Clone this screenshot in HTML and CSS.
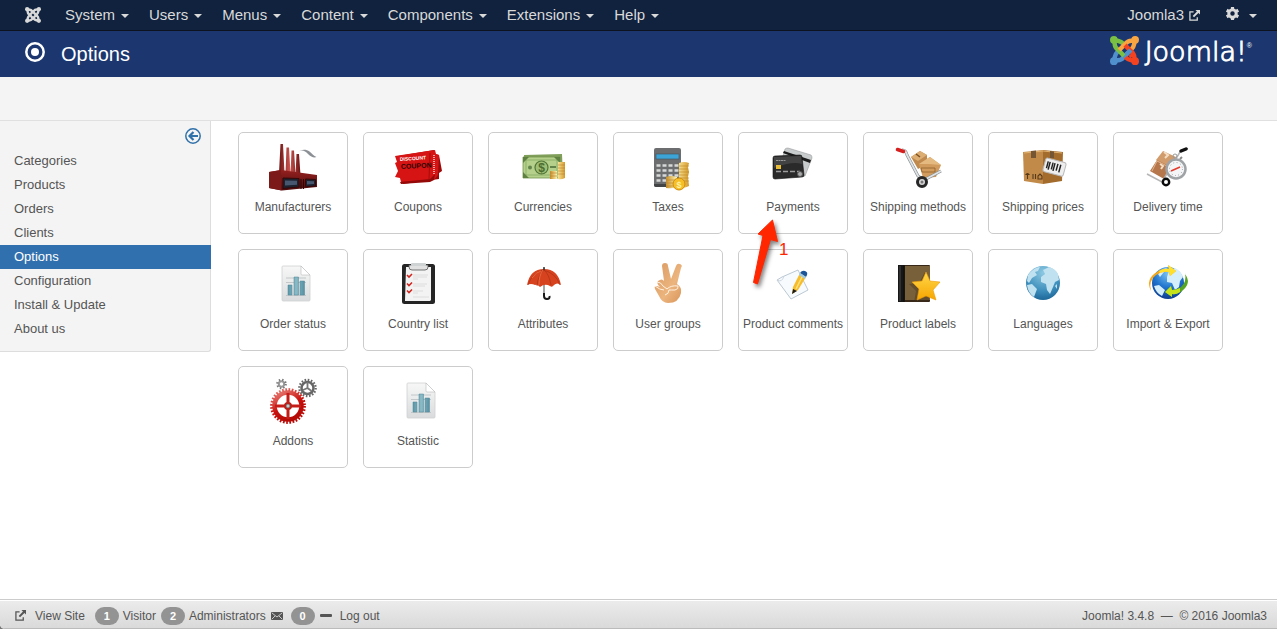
FILE: index.html
```html
<!DOCTYPE html>
<html lang="en">
<head>
<meta charset="utf-8">
<title>Options - Joomla3</title>
<link rel="stylesheet" href="styles.css">
</head>
<body>
<svg class="defs" aria-hidden="true">
  <defs>
    <g id="arm"><circle cx="4" cy="4" r="4" stroke="none"/><path d="M4 4C6 8 3 10 8 14L14.500 20.500M5 4C9 6 10 4 14 8" fill="none" stroke-width="4.600"/></g>
    <symbol id="out" viewBox="0 0 12 12"><path d="M5 2H1v9h8V8" fill="none" stroke="currentColor" stroke-width="1.400"/><path d="M7 0h5v5L10.300 3.300 5.500 8 4 6.500 8.700 1.700z" fill="currentColor"/></symbol>
    <linearGradient id="brick" x2="1"><stop offset="0" stop-color="#6e1414"/><stop offset=".5" stop-color="#c85550"/><stop offset="1" stop-color="#6a1212"/></linearGradient>
    <linearGradient id="wall" x2="0" y2="1"><stop offset="0" stop-color="#94201f"/><stop offset="1" stop-color="#4d0c0c"/></linearGradient>
    <linearGradient id="gold" x2="1"><stop offset="0" stop-color="#c58c2a"/><stop offset=".45" stop-color="#fff0a8"/><stop offset="1" stop-color="#d39a2c"/></linearGradient>
    <linearGradient id="paper" x2="0" y2="1"><stop offset="0" stop-color="#f7f7f7"/><stop offset="1" stop-color="#d9dbdc"/></linearGradient>
    <linearGradient id="bar" x2="1"><stop offset="0" stop-color="#5b98a9"/><stop offset=".5" stop-color="#8abac6"/><stop offset="1" stop-color="#5690a2"/></linearGradient>
    <linearGradient id="star" x2="0" y2="1"><stop offset="0" stop-color="#ffd84a"/><stop offset="1" stop-color="#f7a600"/></linearGradient>
    <linearGradient id="skin" x2="1" y2="1"><stop offset="0" stop-color="#d99a62"/><stop offset=".6" stop-color="#ecb47e"/><stop offset="1" stop-color="#d89558"/></linearGradient>
    <linearGradient id="redgear" x2=".5" y2="1"><stop offset="0" stop-color="#e88078"/><stop offset=".6" stop-color="#c8100c"/><stop offset="1" stop-color="#b50a06"/></linearGradient>
    <radialGradient id="sea" cx=".5" cy=".2" r=".9"><stop offset="0" stop-color="#8cc8e2"/><stop offset=".6" stop-color="#3c8dbb"/><stop offset="1" stop-color="#125a8c"/></radialGradient>
    <radialGradient id="deep" cx=".5" cy=".2" r=".9"><stop offset="0" stop-color="#79c4f4"/><stop offset=".5" stop-color="#1f72cc"/><stop offset="1" stop-color="#0a2f80"/></radialGradient>
    <symbol id="report" viewBox="0 0 48 48">
      <path d="M14 6h18l9 9v25q0 1-1 1H14q-1 0-1-1V7q0-1 1-1z" fill="url(#paper)" stroke="#cfd1d2" stroke-width=".8"/>
      <path d="M32 6l9 9h-8q-1 0-1-1z" fill="#fff" stroke="#b9bbbc" stroke-width=".6"/>
      <path d="M17 18h20M17 22.500h20M17 35.500h20" stroke="#b9bec0" stroke-width=".8"/>
      <path d="M19 25h4v10h-4zM25 17h4.500v18H25zM31 21h4.500v14H31z" fill="url(#bar)" stroke="#4d8797" stroke-width=".5"/>
    </symbol>
  </defs>
</svg>
<div class="page">
  <nav class="topbar" aria-label="Main menu">
    <a class="brand" href="#" aria-label="Joomla"><svg viewBox="0 0 30 30" fill="#d9d9d9" stroke="#d9d9d9"><use href="#arm"/><use href="#arm" transform="rotate(90 15 15)"/><use href="#arm" transform="rotate(180 15 15)"/><use href="#arm" transform="rotate(270 15 15)"/></svg></a>
    <a class="menu" href="#">System<i class="caret"></i></a>
    <a class="menu" href="#">Users<i class="caret"></i></a>
    <a class="menu" href="#">Menus<i class="caret"></i></a>
    <a class="menu" href="#">Content<i class="caret"></i></a>
    <a class="menu" href="#">Components<i class="caret"></i></a>
    <a class="menu" href="#">Extensions<i class="caret"></i></a>
    <a class="menu" href="#">Help<i class="caret"></i></a>
    <a class="menu site" href="#">Joomla3<svg class="out"><use href="#out"/></svg></a>
    <a class="menu gear" href="#" aria-label="User menu"><svg viewBox="0 0 14 14"><circle cx="7" cy="7" r="4" fill="none" stroke="currentColor" stroke-width="3.200"/><path d="M7 0v2.500M7 11.500V14M.8 3.500l2.200 1.200M11 9.300l2.200 1.200M.8 10.500L3 9.300M11 4.700l2.200-1.200" stroke="currentColor" stroke-width="3.400"/></svg><i class="caret"></i></a>
  </nav>
  <header class="header">
    <svg class="target" viewBox="0 0 20 20"><circle cx="10" cy="10" r="8.700" fill="none" stroke="#fff" stroke-width="2.500"/><circle cx="10" cy="10" r="4" fill="#fff"/></svg>
    <h1>Options</h1>
    <a class="logo" href="#">
      <svg viewBox="0 0 30 30"><use href="#arm" transform="rotate(270 15 15)" fill="#5091cd" stroke="#5091cd"/><use href="#arm" fill="#7ac143" stroke="#7ac143"/><use href="#arm" transform="rotate(90 15 15)" fill="#f9a541" stroke="#f9a541"/><use href="#arm" transform="rotate(180 15 15)" fill="#f44321" stroke="#f44321"/><path d="M16.500 19.500l5-5" stroke="#5091cd" stroke-width="4.600"/><path d="M21 19l2 2.500" stroke="#f44321" stroke-width="4.600"/></svg>
      <span class="word">Joomla!</span><sup>®</sup>
    </a>
  </header>
  <div class="subhead"></div>
  <div class="body">
    <aside class="sidebar">
      <div class="tools"><button type="button" aria-label="Hide sidebar"><svg viewBox="0 0 16 16" fill="none" stroke="#3071a9"><circle cx="8" cy="8" r="7.200" stroke-width="1.500"/><path d="M13 8H5M8.500 4L4.500 8l4 4" stroke-width="2.200"/></svg></button></div>
      <a href="#">Categories</a>
      <a href="#">Products</a>
      <a href="#">Orders</a>
      <a href="#">Clients</a>
      <a class="active" href="#">Options</a>
      <a href="#">Configuration</a>
      <a href="#">Install &amp; Update</a>
      <a href="#">About us</a>
    </aside>
    <main class="tiles">
      <a class="tile" href="#"><svg viewBox="0 0 48 48">
        <path d="M11.500 1h2.500l1.500 29h-5.500zM17.500 4.500H20l1.500 26h-5zM22.500 7.500H25l1.500 24h-5zM27.500 11H30l1.500 21h-5z" fill="url(#brick)"/>
        <path d="M29 9c4-3 7-1 10 2s6 4 8.500 3c-3-1-4-3-7-5.500S32 6 29 9z" fill="#8c9095"/>
        <path d="M0 29l12-2 36 5v12l-35 3.500L0 45z" fill="url(#wall)"/><path d="M0 29l12-2 .5 20.500L0 45z" fill="#7c1a1a"/>
        <path d="M14 35l16 .5V44l-16 1.500zM36.500 36l10 .5v6.500l-10 .8z" fill="#1c222e" stroke="#350707"/><path d="M16 37.500l12 .3v4L16 42.500zM38 38l7 .2V41l-7 .4z" fill="#475770"/>
        <path d="M32 36v10M34.500 36v10" stroke="#2c0505"/></svg><span>Manufacturers</span></a>
      <a class="tile" href="#"><svg viewBox="0 0 48 48">
        <path d="M4 13l36-6 1 4 4 1 3 16-3 2v6L9 41l-2-4z" fill="#9c0909"/>
        <path d="M1 13l40-6 1 4 3 1-1 20-4 5-33 2-1-4-5-1 3-6-3-8 2-1z" fill="#d71414"/>
        <path d="M6 39l30-3 5-5-1 6-4 2-29 2z" fill="#950909"/><path d="M36 10l-1 26" stroke="#a60c0c"/>
        <path d="M40 12v19" stroke="#f2a4a0" stroke-width="2" stroke-dasharray="1 1"/>
        <text x="6" y="18" class="coupon light" transform="rotate(-4 6 18)">DISCOUNT</text><text x="7" y="26" class="coupon dark" transform="rotate(-3 7 26)">COUPON</text></svg><span>Coupons</span></a>
      <a class="tile" href="#"><svg viewBox="0 0 48 48">
        <path d="M5 12l38-1 1 22-38 1z" fill="#7f9f5a"/><path d="M4 14h37v21H4z" fill="#b4d08b" stroke="#76954f" stroke-width=".8"/>
        <path d="M7 17h31v15H7z" fill="none" stroke="#86a860" stroke-width=".8"/><path d="M4 14h6l-6 6zM41 14h-6l6 6zM4 35v-6l6 6z" fill="#5e8040"/>
        <circle cx="22.500" cy="24.500" r="6.500" fill="#a0bf76" stroke="#527537" stroke-width="1.200"/><text x="22.500" y="29" class="dollar green">$</text>
        <circle cx="11" cy="24.500" r="2" fill="#62844a"/><path d="M31 24h6" stroke="#62844a" stroke-width="2"/>
        <path d="M31 28h7v8h-7zM39 19h7v16q-4 2-7 1z" fill="url(#gold)"/><path d="M31 30h7m-7 3h7M39 22h7m-7 3h7m-7 3h7m-7 3h7" stroke="#b87c28" stroke-width=".6"/></svg><span>Currencies</span></a>
      <a class="tile" href="#"><svg viewBox="0 0 48 48">
        <rect x="10" y="5" width="27" height="39" rx="2" fill="#6b6d6f"/><path d="M10 41h27v1q0 2-2 2H12q-2 0-2-2z" fill="#424446"/><rect x="12" y="11" width="23" height="5" fill="#3da4d8" stroke="#43525a" stroke-width=".6"/>
        <path d="M12.500 22.500h22M12.500 27.500h22M12.500 32.500h22M12.500 37.500h22" stroke="#d8d8d8" stroke-width="2.600" stroke-dasharray="4 2"/>
        <path d="M35 20q5-2 10 0l-1 4 1 5-1 5 1 9q-5 3-10 1zM22 34q5-2 11 0v10q-5 2-11 1z" fill="url(#gold)"/><path d="M35 23h10m-10 3h9m-9 3h10m-10 3h9m-9 3h10m-10 3h10M22 37h11m-11 3h11m-11 3h11" stroke="#bd841f" stroke-width=".6"/>
        <circle cx="35" cy="41" r="6" fill="#f6bf27" stroke="#d08c0b"/><text x="35" y="44.500" class="dollar coin">$</text></svg><span>Taxes</span></a>
      <div class="spot">
        <a class="tile" href="#"><svg viewBox="0 0 48 48">
          <path d="M16 6q1-1 3-1l23 7q1 1 1 3l-7 18-9 1-13-21z" fill="#c9cccd" stroke="#8b8d8e" stroke-width=".5"/><path d="M14 10l1-2 27 9-1 3z" fill="#1c1c1c"/>
          <path d="M4 15q0-2 2-2l25-1q2 0 2 2l2 18q0 2-2 2L6 36q-2 0-2-2z" fill="#2a2a2a" stroke="#111" stroke-width=".6"/><path d="M5 14l27-1 1 8q-10-3-28 4z" fill="#555" opacity=".6"/>
          <rect x="7" y="22" width="5" height="4" fill="#e7bd39"/><path d="M7 17.500h10" stroke="#999" stroke-width="1.200" stroke-dasharray="2 .5"/><path d="M7 28.500h24" stroke="#9d9d9d" stroke-width="1.300" stroke-dasharray="5 2"/><circle cx="31" cy="31" r="2.500" fill="#aaa" stroke="#555"/></svg><span>Payments</span></a>
        <div class="note"><svg viewBox="0 0 42 76"><path d="M34.500 6L20 20l5 1.500L15.500 68.500l4 1.500 13-44.500 7 2z" fill="#ff2600" stroke="#ff2600"/></svg><b>1</b></div>
      </div>
      <a class="tile" href="#"><svg viewBox="0 0 48 48">
        <path d="M17 14l9-6 7 4v9l-9 5z" fill="#c08a4e"/><path d="M17 14l9-6 7 4-9 6z" fill="#dcae74"/><path d="M22 11l4 3" stroke="#79501f" stroke-width="1.500"/>
        <path d="M25 21l11-7 11 8-5 12-13 1z" fill="#d09b5d"/><path d="M25 21l11-7 11 8-12-1z" fill="#e5ba81"/><path d="M27 25h14v4H28z" fill="none" stroke="#91602b" stroke-width=".8"/>
        <path d="M8 7q4 0 5 5l11 21 6 4 17-9" fill="none" stroke="#868c90" stroke-width="3"/><path d="M8 7q4 0 5 5l11 21 6 4 17-9" fill="none" stroke="#dfe3e5" stroke-width="1.800"/>
        <path d="M3.500 6.500l6 2" stroke="#d6201f" stroke-width="3.500" stroke-linecap="round"/><circle cx="28" cy="39" r="4.500" fill="#d9d9d9" stroke="#272727" stroke-width="3"/><circle cx="28" cy="39" r="1.500" fill="#777"/></svg><span>Shipping methods</span></a>
      <a class="tile" href="#"><svg viewBox="0 0 48 48">
        <path d="M4 9l20-2v34L5 38z" fill="#c18a48"/><path d="M24 7l20 2-1 29-19 3z" fill="#a36b2c"/><path d="M5 10l19-2 19 2" stroke="#e0b16f" fill="none"/><path d="M12 8l5-.5V15h-5zM31 8l4 .5V15h-4z" fill="#745634"/>
        <path d="M6 32q2.500-4 5 0z" fill="#57391a"/><path d="M8.500 31v5M14 31v5M16.500 31v5M19 36h4v-3l-2-2-2 2z" fill="none" stroke="#57391a" stroke-width="1.100"/>
        <g transform="rotate(15 35 24)"><rect x="25" y="17" width="21" height="14" rx="2" fill="#eee" stroke="#b9b9b9"/><path d="M28 20v7M30 20v8M33 20v7M35 20v8M38 20v7M41 20v8" stroke="#222" stroke-width="1.500"/></g></svg><span>Shipping prices</span></a>
      <a class="tile" href="#"><svg viewBox="0 0 48 48">
        <path d="M12 17l7-9 13 6-6 11z" fill="#d29b6c"/><path d="M6 28l7-11 14 7-7 12z" fill="#b5774b"/><path d="M8 28l5-10 12 6" fill="none" stroke="#e5b78e"/><path d="M20 9l4 3-3 3M16 21l3 2-2 3" stroke="#f3dec4" stroke-width="2" fill="none"/>
        <path d="M3 31l15 8L36 9" fill="none" stroke="#b6b6b6" stroke-width="1.500"/><path d="M37 8l5-2" stroke="#111" stroke-width="3.500" stroke-linecap="round"/>
        <circle cx="22" cy="39" r="3.200" fill="#fff" stroke="#0b0b0b" stroke-width="2.400"/><circle cx="31" cy="13" r="2" fill="none" stroke="#999"/>
        <circle cx="32" cy="26" r="9.500" fill="#f4f5f6" stroke="#9fa3a6" stroke-width="2.500"/><circle cx="32" cy="26" r="6.500" fill="none" stroke="#7e8285" stroke-dasharray=".7 2.700"/><path d="M27 28l9-4" stroke="#e33b2e" stroke-width="1.500"/><path d="M36 16l2-2" stroke="#888" stroke-width="2"/></svg><span>Delivery time</span></a>
      <a class="tile" href="#"><svg><use href="#report"/></svg><span>Order status</span></a>
      <a class="tile" href="#"><svg viewBox="0 0 48 48">
        <rect x="8" y="4" width="33" height="40" rx="2.500" fill="#252525"/><path d="M12 7h25v33l-1 1H11z" fill="#f3f3f3"/><path d="M15 5h19v2q0 3-3 3H18q-3 0-3-3z" fill="#e1e1e1" stroke="#555" stroke-width=".8"/><rect x="17" y="3" width="15" height="3" rx="1" fill="#cfd3d4"/>
        <path d="M13 15l2 2 3-3M13 23.500l2 2 3-3M13 30.500l2 2 3-3" fill="none" stroke="#d0271f" stroke-width="1.600"/><path d="M19 15h15M19 17h14M19 19h5M19 24h14M19 26h12M19 31h10M19 33h5M19 37h16" stroke="#d4d4d4" stroke-width=".7"/></svg><span>Country list</span></a>
      <a class="tile" href="#"><svg viewBox="0 0 48 48">
        <path d="M25 8v2M25 24v11" stroke="#777" stroke-width="1.300"/><path d="M25 33v3q0 3 3 3t2.500-3" fill="none" stroke="#191919" stroke-width="2"/>
        <path d="M8 25Q11 9 25 9t17 16q-4-3-7 0-2 3-4 1-5-3-10 1-3-3-5-2-4-2-8 0z" fill="#d7431f"/><path d="M18 26q1-11 7-16 5 4 7 15M9 25q4-12 15-15 13 3 17 15" fill="none" stroke="#a93216" stroke-width=".7"/><path d="M24 10q-4 5-4 15M13 18q4-6 9-7" fill="none" stroke="#e8683f"/><path d="M25 7v3" stroke="#333" stroke-width="1.500"/></svg><span>Attributes</span></a>
      <a class="tile" href="#"><svg viewBox="0 0 48 48">
        <path d="M20 21L18 6q0-3 3-3t3 3l3 13 5-13q1-3 4-2t1 4l-4 16q5 3 4 9-2 10-13 10-6 0-9-7l-4-7q-1-3 1-3t4 1q-4-4-2-6 4-3 6 0z" fill="url(#skin)"/><path d="M13 22q4 0 6 4l4 3q4-4 11-3M11 26q5 4 9 4M34 26q1 3-3 4-4 0-6 0 0 4-4 5" fill="none" stroke="#fff2e2" stroke-width="1"/></svg><span>User groups</span></a>
      <a class="tile" href="#"><svg viewBox="0 0 48 48">
        <path d="M8 20l5-3 16-7 10 20-17 9z" fill="#f8fbfd" stroke="#a9bac8" stroke-width=".8"/><path d="M8 20q5 3 7-4" fill="none" stroke="#c5d2dc" stroke-width=".9"/>
        <path d="M23 34l1-7 7-14 6 4-8 13z" fill="#f7bd2b"/><path d="M27 29l7-14" stroke="#ffe17b" stroke-width="1.500"/><path d="M31 13q2-3 5-2t2 4l-1 2z" fill="#1c5698"/><path d="M31 13l6 4-1 2-6-4z" fill="#9fcbe5"/><path d="M23 34l1-5 4 2z" fill="#1b1b1b"/></svg><span>Product comments</span></a>
      <a class="tile" href="#"><svg viewBox="0 0 48 48">
        <rect x="4" y="5" width="32" height="37" rx="1" fill="#362719"/><path d="M11 6h25v34H11z" fill="#78613a"/><path d="M4 5h6v37H4z" fill="#171717"/><path d="M6 6v35" stroke="#555" stroke-width=".8"/><path d="M10 5v37" stroke="#111" stroke-width="1.500"/>
        <path d="M31 12l4 9v20l-15 1 2-11-7-7 10-1z" fill="#40301b" opacity=".4"/><path d="M32 12l4 9 10 1-7 8 3 10-10-4-9 4 2-11-7-7 10-1z" fill="url(#star)" stroke="#ec9b07" stroke-width=".6"/></svg><span>Product labels</span></a>
      <a class="tile" href="#"><svg viewBox="0 0 48 48"><circle cx="24" cy="23" r="17" fill="url(#sea)"/>
        <path d="M9 15q6-8 12-8l-2 4-3 1 2 3-5 3-3 5-2-2zM8 25l5-1 5 5-3 8q-6-4-7-12zM24 10l6-3q7 2 9 7l1 6-4 2-2 5-3 7-3-4-1-6-5-2v-5l4-3zM36 26l2-2v5z" fill="#c0e1ef"/></svg><span>Languages</span></a>
      <a class="tile" href="#"><svg viewBox="0 0 48 48"><circle cx="24" cy="23" r="16" fill="url(#deep)"/>
        <path d="M10 26l5-1 6 5-3 6q-6-3-8-10zM25 11l6-3q6 3 8 9l-3 4-1 6-4 3-3-7-5-1v-5zM14 14l5-5 4-1-3 4-4 5z" fill="#d5eefc"/>
        <path d="M7 31Q1 19 13 12q5-4 12-3l-1-4 8 6-6 5-1-4q-7-1-13 3Q4 21 7 31z" fill="#f7a71b"/><path d="M15 11q5-3 10-2l-1-4 8 6-6 5-1-4q-5-1-9 1z" fill="#ffe02b"/>
        <path d="M41 14q7 9-3 17-5 4-10 3v3l-7-5 6-6 1 4q5 0 9-3 6-5 4-14z" fill="#56a522"/><path d="M36 32q-4 3-8 2v3l-7-5 6-6 1 4q4 0 8-2z" fill="#c5e21b"/></svg><span>Import &amp; Export</span></a>
      <a class="tile" href="#"><svg viewBox="0 0 48 48">
        <circle cx="12.500" cy="7" r="2.700" fill="none" stroke="#999" stroke-width="2"/><circle cx="12.500" cy="7" r="4.300" fill="none" stroke="#777" stroke-width="2" stroke-dasharray="1.400 2"/>
        <circle cx="38.500" cy="11" r="6" fill="none" stroke="#666" stroke-width="2.500"/><circle cx="38.500" cy="11" r="8.200" fill="none" stroke="#666" stroke-width="2.200" stroke-dasharray="1.600 1.620"/><path d="M38.500 11l-4.500 2M38.500 11l4 3M38.500 11V5" stroke="#777" stroke-width="1.800"/>
        <circle cx="19" cy="29" r="13.500" fill="none" stroke="url(#redgear)" stroke-width="4.500"/><circle cx="19" cy="29" r="16.500" fill="none" stroke="url(#redgear)" stroke-width="2.800" stroke-dasharray="1.700 1.540"/>
        <path d="M19 16v26M6 29h26" stroke="#c51c17" stroke-width="3"/><circle cx="19" cy="29" r="4" fill="#bd201a"/><circle cx="19" cy="29" r="2" fill="#ccc" stroke="#555" stroke-width=".6"/></svg><span>Addons</span></a>
      <a class="tile" href="#"><svg><use href="#report"/></svg><span>Statistic</span></a>
    </main>
  </div>
  <footer class="status">
    <a class="view" href="#"><svg class="out"><use href="#out"/></svg>View Site</a>
    <span class="stat"><span class="badge">1</span>Visitor</span>
    <span class="stat"><span class="badge">2</span>Administrators</span>
    <a class="mail" href="#" aria-label="Messages"><svg viewBox="0 0 12 8"><rect width="12" height="8" rx="1" fill="#555"/><path d="M1 1l5 4 5-4M1 7l3-3M11 7L8 4" fill="none" stroke="#e6e6e6" stroke-width=".8"/></svg><span class="badge">0</span></a>
    <a class="logout" href="#"><i class="minus"></i>Log out</a>
    <span class="version">Joomla! 3.4.8 &nbsp;—&nbsp; © 2016 Joomla3</span>
  </footer>
</div>
</body>
</html>
```
FILE: styles.css
```css
* { box-sizing: border-box; }
body { margin: 0; background: #777; color: #555; font: 13px/24px "Liberation Sans", Arial, sans-serif; }
a { color: inherit; text-decoration: none; }
svg { display: block; flex: none; }
.defs { position: absolute; width: 0; height: 0; }
.page { min-height: 100vh; display: flex; flex-direction: column; background: #fff; border-bottom-left-radius: 5px; overflow: hidden; }

.topbar { display: flex; align-items: center; gap: 20px; height: 31px; padding: 0 20px 0 25px; background: #10223e; border-bottom: 1px solid #0d1420; color: #d9d9d9; font-size: 15px; line-height: 30px; }
.brand { margin-right: 4px; }
.brand svg { width: 16px; height: 16px; }
.menu { display: flex; align-items: center; gap: 6px; }
.caret { border: 4px solid transparent; border-top-color: currentColor; border-bottom: 0; margin-top: 2px; }
.site { margin-left: auto; gap: 5px; }
.out { width: 11px; height: 11px; }
.gear { margin-left: 6px; gap: 10px; }
.gear svg { width: 13px; height: 13px; margin-bottom: 3px; }

.header { display: flex; align-items: center; height: 46px; padding: 0 25px; background: #1c3770; color: #fff; }
.target { width: 20px; height: 20px; margin-bottom: 4px; }
h1 { margin: 0 auto 0 16px; font-size: 20px; font-weight: 400; line-height: 46px; }
.logo { display: flex; align-items: center; }
.logo svg { width: 29px; height: 29px; margin-bottom: 7px; }
.word { margin-left: 6px; font: 200 27px/40px "DejaVu Sans", sans-serif; margin-bottom: 4px; -webkit-text-stroke: 1px #fff; }
.logo sup { font-size: 7px; line-height: 8px; margin-bottom: 16px; }

.subhead { height: 44px; background: #f4f4f4; border-bottom: 1px solid #e0e0e0; }

.body { flex: 1; display: flex; align-items: flex-start; }
.sidebar { flex: none; width: 211px; padding-bottom: 10px; background: #f4f4f4; border: 1px solid #ddd; border-width: 0 1px 1px 0; border-bottom-right-radius: 3px; }
.tools { display: flex; justify-content: flex-end; height: 28px; padding: 7px 9px 0 0; }
.tools button { width: 16px; height: 16px; padding: 0; border: 0; background: none; }
.sidebar a { display: block; padding-left: 14px; }
.sidebar .active { margin-right: -1px; background: #3170ae; color: #fff; }

.tiles { flex: 1; display: grid; grid-template-columns: repeat(auto-fill, 110px); gap: 15px; padding: 11px 27px; font-size: 12px; line-height: 20px; }
.tile { display: flex; flex-direction: column; align-items: center; gap: 6px; padding: 10px 0 16px; border: 1px solid #ccc; border-radius: 5px; white-space: nowrap; }
.tile svg { width: 48px; height: 48px; }
.coupon { font: bold 5px "Liberation Sans", sans-serif; }
.light { fill: #fff; }
.dark { fill: #2b0303; font-size: 7px; }
.dollar { font: bold 12px "Liberation Sans", sans-serif; text-anchor: middle; }
.green { fill: #4b6e30; }
.coin { font-size: 9px; fill: #fff3a5; }

.spot { position: relative; }
.note { position: absolute; z-index: 1; left: 0; top: 82px; color: #ff2600; pointer-events: none; }
.note svg { width: 42px; height: 76px; filter: drop-shadow(2px 3px 2px rgba(0, 0, 0, .5)); }
.note b { position: absolute; left: 41px; top: 26px; font-size: 17px; font-weight: 400; }

.status { display: flex; align-items: center; height: 30px; padding: 2px 10px 0 15px; border-top: 1px solid #ccc; background: linear-gradient(#ececec, #d9d9d9); box-shadow: inset 0 1px #fff, inset 0 -1px #bbb; font-size: 12px; }
.view, .stat, .mail, .logout { display: flex; align-items: center; }
.view { gap: 9px; margin-right: 10px; }
.stat { gap: 4px; margin-right: 5px; }
.badge { min-width: 24px; border-radius: 9px; background: #939393; color: #fff; font-size: 11px; font-weight: 700; line-height: 18px; text-align: center; }
.mail { gap: 8px; margin-right: 5px; }
.mail svg { width: 12px; height: 8px; }
.logout { gap: 8px; }
.minus { width: 12px; height: 3px; border-radius: 1px; background: #555; }
.version { margin-left: auto; }
```
